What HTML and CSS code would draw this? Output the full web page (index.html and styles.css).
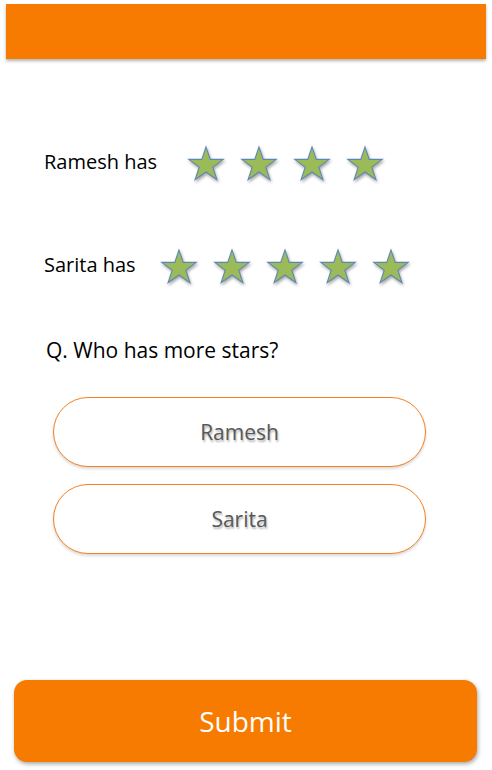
FILE: index.html
```html
<!DOCTYPE html>
<html>
<head>
<meta charset="utf-8">
<link rel="stylesheet" href="styles.css">
</head>
<body>
<div class="page">
  <div class="topbar"></div>
  <div class="row row-ramesh">
    <span class="label label-ramesh">Ramesh has</span>
    <div class="stars">
      <svg class="star" viewBox="0 0 100 96"><polygon points="50,2 61.8,36.6 98,36.6 68.9,58 80.3,93 50,71.6 19.7,93 31.1,58 2,36.6 38.2,36.6"/></svg>
      <svg class="star" viewBox="0 0 100 96"><polygon points="50,2 61.8,36.6 98,36.6 68.9,58 80.3,93 50,71.6 19.7,93 31.1,58 2,36.6 38.2,36.6"/></svg>
      <svg class="star" viewBox="0 0 100 96"><polygon points="50,2 61.8,36.6 98,36.6 68.9,58 80.3,93 50,71.6 19.7,93 31.1,58 2,36.6 38.2,36.6"/></svg>
      <svg class="star" viewBox="0 0 100 96"><polygon points="50,2 61.8,36.6 98,36.6 68.9,58 80.3,93 50,71.6 19.7,93 31.1,58 2,36.6 38.2,36.6"/></svg>
    </div>
  </div>
  <div class="row row-sarita">
    <span class="label label-sarita">Sarita has</span>
    <div class="stars">
      <svg class="star" viewBox="0 0 100 96"><polygon points="50,2 61.8,36.6 98,36.6 68.9,58 80.3,93 50,71.6 19.7,93 31.1,58 2,36.6 38.2,36.6"/></svg>
      <svg class="star" viewBox="0 0 100 96"><polygon points="50,2 61.8,36.6 98,36.6 68.9,58 80.3,93 50,71.6 19.7,93 31.1,58 2,36.6 38.2,36.6"/></svg>
      <svg class="star" viewBox="0 0 100 96"><polygon points="50,2 61.8,36.6 98,36.6 68.9,58 80.3,93 50,71.6 19.7,93 31.1,58 2,36.6 38.2,36.6"/></svg>
      <svg class="star" viewBox="0 0 100 96"><polygon points="50,2 61.8,36.6 98,36.6 68.9,58 80.3,93 50,71.6 19.7,93 31.1,58 2,36.6 38.2,36.6"/></svg>
      <svg class="star" viewBox="0 0 100 96"><polygon points="50,2 61.8,36.6 98,36.6 68.9,58 80.3,93 50,71.6 19.7,93 31.1,58 2,36.6 38.2,36.6"/></svg>
    </div>
  </div>
  <p class="question">Q. Who has more stars?</p>
  <div class="options">
    <div class="option">Ramesh</div>
    <div class="option">Sarita</div>
  </div>
  <div class="submit">Submit</div>
</div>
</body>
</html>
```

FILE: styles.css
```css
html, body {
  margin: 0;
  padding: 0;
  background: #ffffff;
}
.page {
  width: 492px;
  height: 770px;
  display: flex;
  flex-direction: column;
  font-family: "Open Sans", "Liberation Sans", sans-serif;
  color: #000;
}
.topbar {
  margin: 4px 6px 0 6px;
  height: 55px;
  background: #f77b00;
  box-shadow: 0 2px 3px rgba(0,0,0,0.3);
}
.row {
  display: flex;
  align-items: center;
  padding-left: 44px;
  height: 37px;
}
.row-ramesh { margin-top: 86px; }
.row-sarita { margin-top: 66px; }
.label {
  font-size: 20px;
  line-height: 26px;
  margin-top: -4px;
}
.label-ramesh { width: 144px; }
.label-sarita { width: 117px; }
.stars {
  display: flex;
  gap: 17px;
}
.star {
  width: 36px;
  height: 37px;
  overflow: visible;
  filter: drop-shadow(1px 2px 1.5px rgba(0,0,0,0.35));
}
.star polygon {
  fill: #9bbb59;
  stroke: #5d86b8;
  stroke-width: 3;
  stroke-linejoin: miter;
}
.question {
  margin: 51px 0 0 46px;
  font-size: 21px;
  line-height: 28px;
}
.options {
  display: flex;
  flex-direction: column;
  gap: 17px;
  margin: 33px 0 0 53px;
  width: 373px;
}
.option {
  height: 68px;
  border: 1px solid #f58220;
  border-radius: 35px;
  display: flex;
  align-items: center;
  justify-content: center;
  font-size: 21px;
  color: #595959;
  text-shadow: 1px 2px 2px rgba(0,0,0,0.3);
  box-shadow: 0 2px 3px rgba(0,0,0,0.15);
  background: #fff;
}
.submit {
  margin: auto 15px 8px 14px;
  height: 82px;
  border-radius: 13px;
  background: #f77b00;
  color: #fff;
  font-size: 28px;
  display: flex;
  align-items: center;
  justify-content: center;
  box-shadow: 1px 2px 4px rgba(0,0,0,0.35);
}
```
